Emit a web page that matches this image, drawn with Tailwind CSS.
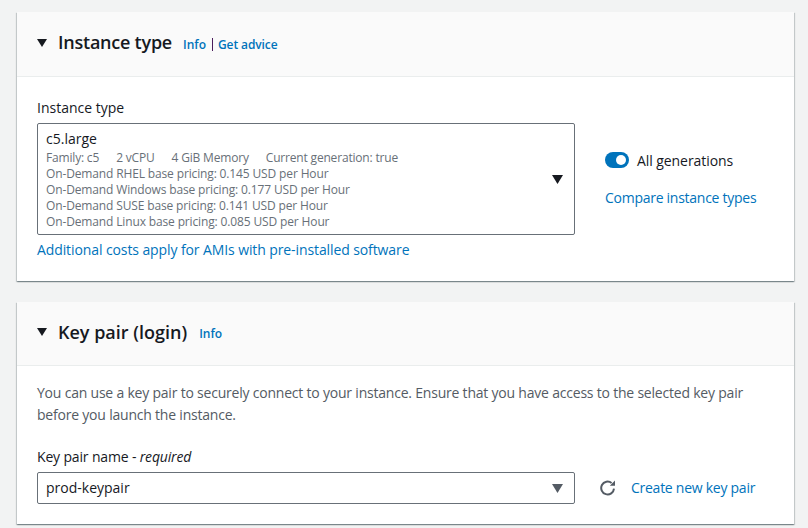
<!DOCTYPE html>
<html lang="en">
  <head>
    <meta charset="UTF-8" />
    <title>Launch instance</title>
    <script src="https://cdn.jsdelivr.net/npm/@tailwindcss/browser@4"></script>
  </head>
  <body class="bg-[#f2f3f3] h-[528px] w-[808px] overflow-hidden font-['Open_Sans','Noto_Sans',sans-serif] text-[#16191f]">
    <div class="pl-[17px] pr-[14px] pt-[12px] flex flex-col gap-[21px]">
      <!-- Instance type -->
      <section class="bg-white h-[269px] shadow-[0_1px_1px_0_rgba(0,28,36,0.3),1px_1px_1px_0_rgba(0,28,36,0.15),-1px_1px_1px_0_rgba(0,28,36,0.15)]">
        <header class="h-[65px] bg-[#fafafa] border-b border-[#eaeded] flex items-center pl-[20px]">
          <svg class="w-[10px] h-[8px] mr-[11px] mb-[3px]" viewBox="0 0 10 8"><path d="M0 0h10L5 8z" fill="#16191f" /></svg>
          <h2 class="text-[18px] font-semibold leading-none mb-[4px] tracking-[-0.23px]">Instance type</h2>
          <span class="ml-[11px] text-[12px] font-semibold text-[#0073bb] mt-[1px]">Info</span>
          <span class="ml-[6px] mr-[5px] w-px h-[13px] bg-[#4b1d5c] mt-[1px]"></span>
          <span class="text-[12px] font-semibold text-[#0073bb] mt-[1px] tracking-[-0.1px]">Get advice</span>
        </header>
        <div class="pl-[20px] pt-[21px]">
          <label class="block text-[14px] leading-[20px]">Instance type</label>
          <div class="flex mt-[5px]">
            <div class="w-[538px] h-[112px] border border-[#687078] rounded-[2px] pl-[8px] pt-[5px] flex justify-between">
              <div>
                <p class="text-[14px] leading-[20px] text-[#16191f]">c5.large</p>
                <div class="text-[12px] leading-[16px] text-[#687078] mt-[1px] tracking-[-0.14px]">
                  <p class="flex gap-[17px] tracking-[-0.18px]"><span>Family: c5</span><span>2 vCPU</span><span>4 GiB Memory</span><span>Current generation: true</span></p>
                  <p>On-Demand RHEL base pricing: 0.145 USD per Hour</p>
                  <p>On-Demand Windows base pricing: 0.177 USD per Hour</p>
                  <p>On-Demand SUSE base pricing: 0.141 USD per Hour</p>
                  <p>On-Demand Linux base pricing: 0.085 USD per Hour</p>
                </div>
              </div>
              <svg class="w-[11px] h-[9px] mt-[46px] mr-[11px]" viewBox="0 0 11 9"><path d="M0 0h11L5.5 9z" fill="#16191f" /></svg>
            </div>
            <div class="ml-[30px] pt-[27px]">
              <div class="flex items-center h-[20px]">
                <span class="w-[24px] h-[16px] rounded-full bg-[#0073bb] flex items-center justify-end pr-[3px]"><span class="w-[10px] h-[10px] rounded-full bg-white"></span></span>
                <span class="ml-[8px] text-[14px] tracking-[-0.07px]">All generations</span>
              </div>
              <a class="block mt-[18px] text-[14px] leading-[20px] text-[#0073bb] tracking-[-0.27px]">Compare instance types</a>
            </div>
          </div>
          <a class="block mt-[5px] text-[14px] leading-[20px] text-[#0073bb] tracking-[-0.1px]">Additional costs apply for AMIs with pre-installed software</a>
        </div>
      </section>
      <!-- Key pair -->
      <section class="bg-white h-[222px] shadow-[0_1px_1px_0_rgba(0,28,36,0.3),1px_1px_1px_0_rgba(0,28,36,0.15),-1px_1px_1px_0_rgba(0,28,36,0.15)]">
        <header class="h-[64px] bg-[#fafafa] border-b border-[#eaeded] flex items-center pl-[20px]">
          <svg class="w-[10px] h-[8px] mr-[11px] mb-[3px]" viewBox="0 0 10 8"><path d="M0 0h10L5 8z" fill="#16191f" /></svg>
          <h2 class="text-[18px] font-semibold leading-none mb-[4px]">Key pair (login)</h2>
          <span class="ml-[12px] text-[12px] font-semibold text-[#0073bb] mt-[1px]">Info</span>
        </header>
        <div class="pl-[20px] pt-[16px]">
          <p class="w-[730px] text-[14px] leading-[22px] text-[#545b64] tracking-[-0.21px]">You can use a key pair to securely connect to your instance. Ensure that you have access to the selected key pair before you launch the instance.</p>
          <label class="block mt-[21px] text-[14px] leading-[20px] tracking-[-0.16px]">Key pair name - <i>required</i></label>
          <div class="flex items-center mt-[5px]">
            <div class="w-[538px] h-[32px] border border-[#687078] rounded-[2px] pl-[8px] pr-[11px] flex items-center justify-between">
              <span class="text-[14px] text-[#16191f] mb-[1px]">prod-keypair</span>
              <svg class="w-[11px] h-[9px]" viewBox="0 0 11 9"><path d="M0 0h11L5.5 9z" fill="#545b64" /></svg>
            </div>
            <svg class="ml-[25px] w-[16px] h-[16px]" viewBox="0 0 16 16" fill="none" stroke="#545b64" stroke-width="2"><path d="M14 8.6A6.4 6.4 0 1 1 11.6 3" /><path d="M15 .5v5.2H9.8z" fill="#545b64" stroke="none" /></svg>
            <a class="ml-[15px] text-[14px] leading-[20px] text-[#0073bb] tracking-[-0.26px]">Create new key pair</a>
          </div>
        </div>
      </section>
    </div>
  </body>
</html>
